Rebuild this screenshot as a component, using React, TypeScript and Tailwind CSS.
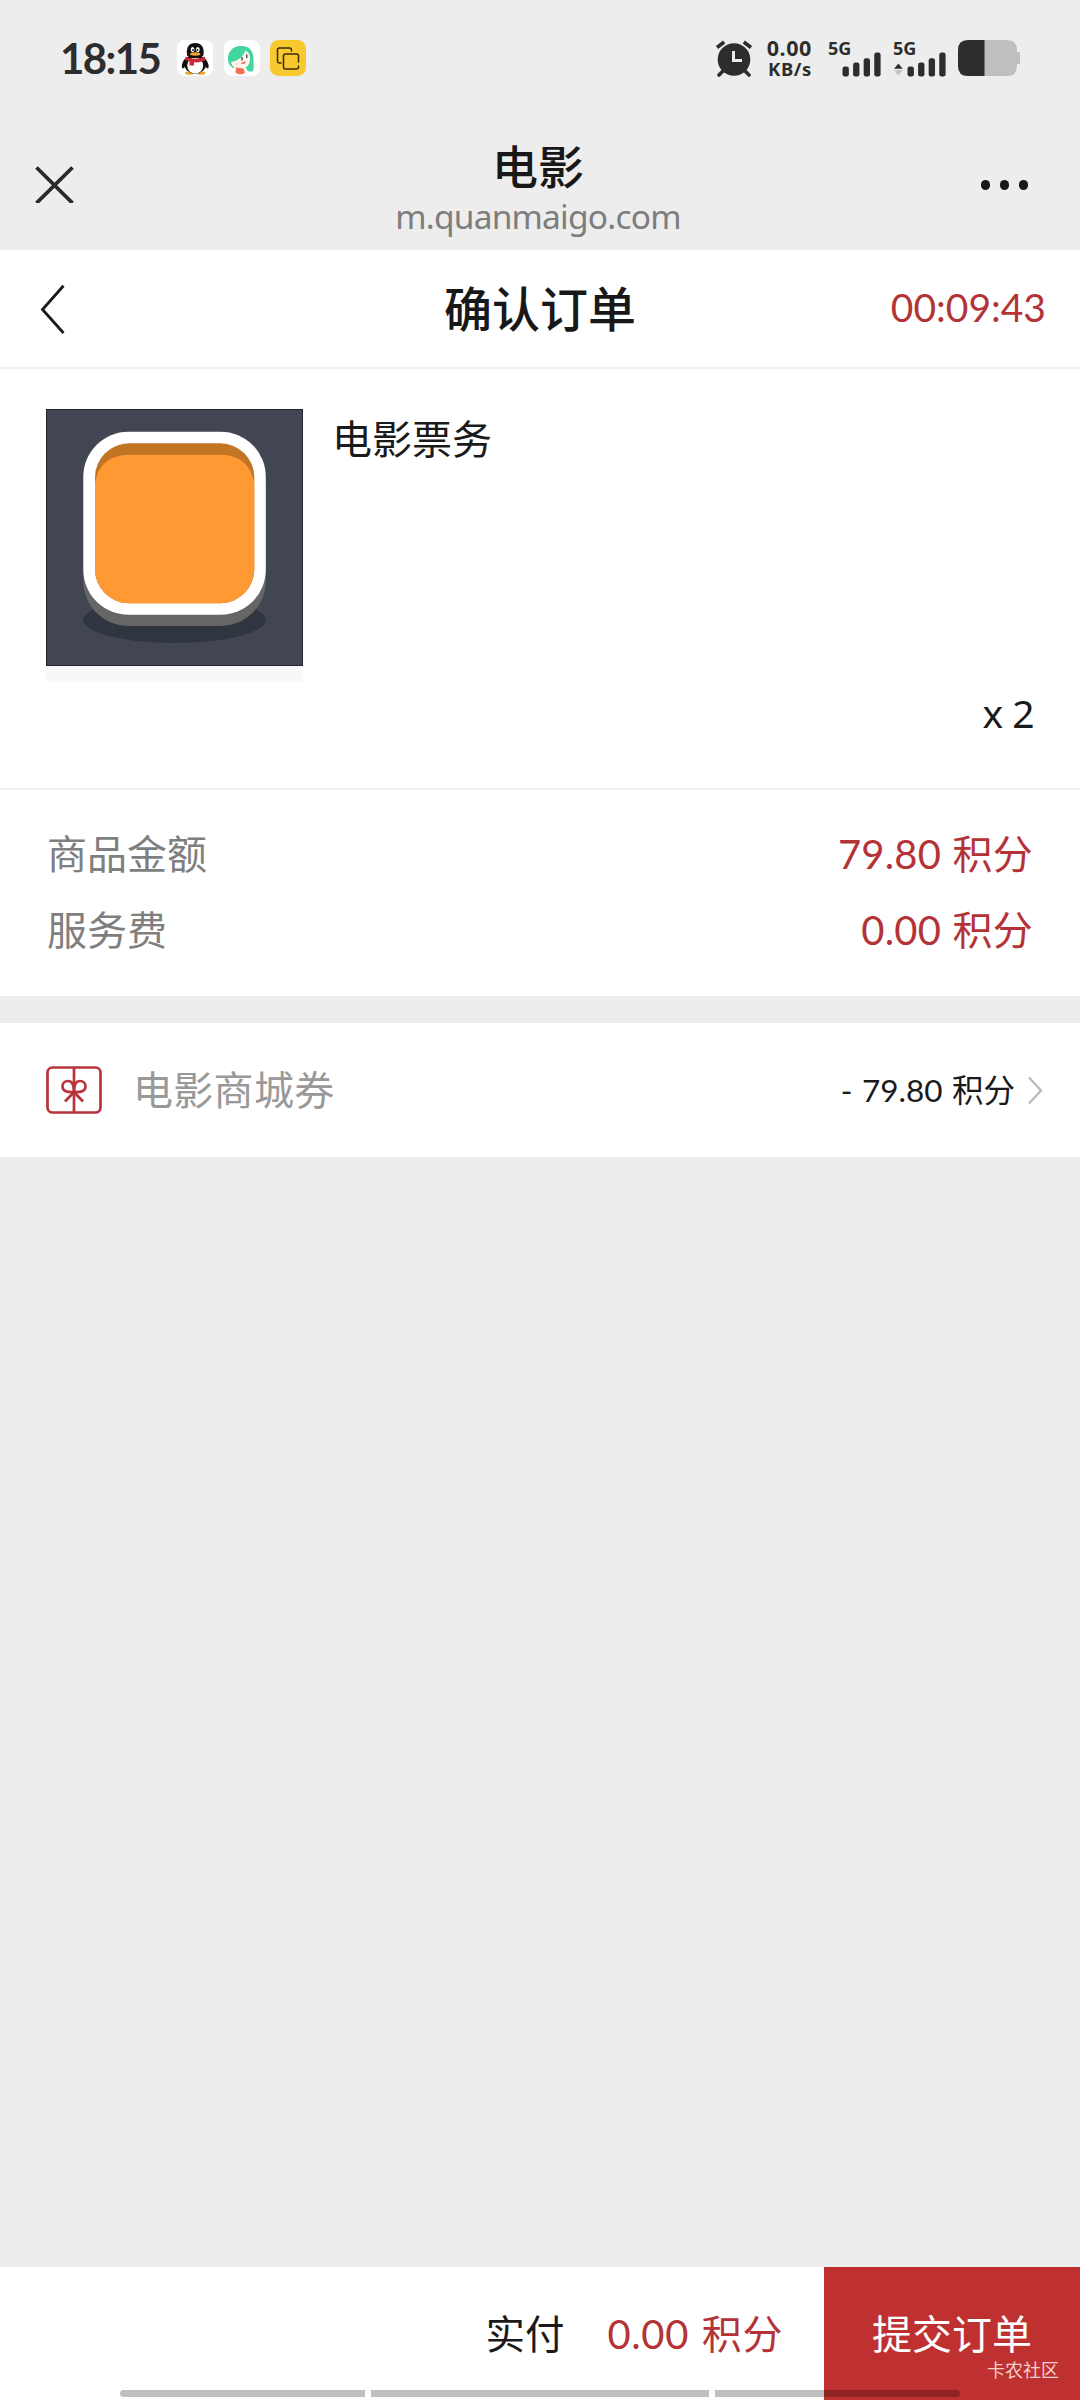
import React from "react";

const CJK = "font-['Noto_Sans_CJK_SC',sans-serif]";
const NUM = "font-['Lato','Noto_Sans_CJK_SC',sans-serif]";

function PenguinIcon() {
  return (
    <svg className="h-9 w-9" viewBox="0 0 36 36">
      <rect width="36" height="36" rx="8" fill="#fff" />
      <ellipse cx="12.5" cy="33" rx="4.5" ry="1.8" fill="#e9a52c" />
      <ellipse cx="24" cy="33" rx="4.5" ry="1.8" fill="#e9a52c" />
      <path d="M8.5 18C5 22 4 27 5.6 28.4C7 29 8 26 9 25ZM27.5 18C31.5 22 32.5 27 31 28.4C29.6 29 28.5 26 27.5 25Z" fill="#111" />
      <ellipse cx="18.2" cy="24" rx="11" ry="9.7" fill="#111" />
      <ellipse cx="18.2" cy="25.5" rx="8" ry="8" fill="#fff" />
      <path d="M10 15C9 7 12 3 18.2 3S27.5 7 26.5 15C25 19 11 19 10 15Z" fill="#111" />
      <ellipse cx="15.6" cy="9.6" rx="1.9" ry="2.6" fill="#fff" />
      <ellipse cx="20.8" cy="9.6" rx="1.9" ry="2.6" fill="#fff" />
      <circle cx="16" cy="10" r="0.9" fill="#111" />
      <circle cx="20.4" cy="10" r="0.9" fill="#111" />
      <ellipse cx="18.2" cy="14" rx="5.2" ry="1.7" fill="#f2a33a" />
      <path d="M8.5 16.5C14 19.5 22 19.5 27.8 16.5L28.5 20C24 22.5 20 22.6 17 22.3V25.5H12.5V21.5L8 19.8Z" fill="#c9283a" />
    </svg>
  );
}

function AvatarIcon() {
  return (
    <svg className="h-9 w-9" viewBox="0 0 36 36">
      <rect width="36" height="36" rx="8" fill="#fff" />
      <path d="M5.5 25C1.500 16 6 6 17 6C25 5.5 29.5 11 29.5 19C29.5 25 30.500 29 28.500 31.500C25 32 23 31 22 28L9 28Z" fill="#41d6a0" />
      <path d="M7 22C14 21.500 19.500 16 21.500 10.500C25 12.500 26.500 15.5 26 19.500C25.500 25.500 22 29 16.500 29C11.500 29 8 27 7 22Z" fill="#fff3ee" />
      <path d="M12 27.500L19.500 28.500L21 33C17 35 14 34.5 11.5 32.5Z" fill="#f26d52" />
      <path d="M18 17.5V20M22.8 15V17.5" stroke="#4a3a3a" strokeWidth="1.3" strokeLinecap="round" />
      <path d="M17.500 22.800C19 23.800 20.7 23 21.200 21.8" stroke="#d2483e" strokeWidth="1.2" fill="none" />
      <circle cx="12.5" cy="24" r="1.4" fill="#ffd9ce" />
    </svg>
  );
}

function CopyAppIcon() {
  return (
    <svg className="h-9 w-9" viewBox="0 0 36 36" fill="none" stroke="#3b2a10" strokeWidth="1.5" strokeLinecap="round">
      <rect width="36" height="36" rx="8.5" fill="#f7c92f" stroke="none" />
      <path d="M11 23H9.5Q7.5 23 7.5 21V10Q7.5 8 9.5 8H19.5Q21.5 8 21.5 10V11" />
      <path d="M28.5 22V16Q28.5 14 26.5 14H15.5Q13.5 14 13.5 16V27Q13.5 29 15.5 29H26.5Q28.5 29 28.5 27V26" />
    </svg>
  );
}

function AlarmIcon() {
  return (
    <svg className="h-[37px] w-[38px]" viewBox="0 0 38 37" fill="none">
      <path d="M8 31L4 35M30 31L34 35" stroke="#2d2d2d" strokeWidth="3.6" strokeLinecap="round" />
      <circle cx="19" cy="19.5" r="16.3" fill="#2d2d2d" />
      <path d="M2 7.5L9.2 2M36 7.5L28.8 2" stroke="#2d2d2d" strokeWidth="3.6" />
      <path d="M18.5 11V20.5H27" stroke="#ececec" strokeWidth="3" />
    </svg>
  );
}

function SignalBars({ data }: { data?: boolean }) {
  return (
    <svg className="h-[26px] w-[55px]" viewBox="0 0 55 26" fill="#2d2d2d">
      {data && <path d="M0 17.5L4.5 12L9 17.5Z" />}
      {data && <path d="M0 19L4.5 24.5L9 19Z" fill="#c2c2c2" />}
      <rect x="14" y="15" width="6.6" height="10.5" rx="2.4" />
      <rect x="25" y="11" width="6.6" height="14.5" rx="2.4" />
      <rect x="36" y="6.5" width="6.6" height="19" rx="2.4" />
      <rect x="47" y="0.5" width="6.6" height="25" rx="2.4" />
    </svg>
  );
}

function Signal({ data }: { data?: boolean }) {
  return (
    <div className="flex h-[37px] w-[65px] flex-col justify-between">
      <span className="h-[12px] font-['Noto_Sans'] text-[18px] leading-[17px] font-bold">5G</span>
      <SignalBars data={data} />
    </div>
  );
}

function Battery() {
  return (
    <svg className="h-9 w-[63px]" viewBox="0 0 63 36">
      <path d="M26 0H49Q59 0 59 10V12H62V24H59V26Q59 36 49 36H26Z" fill="#bfbfbf" />
      <path d="M26.5 0H10Q0 0 0 10V26Q0 36 10 36H26.5Z" fill="#2d2d2d" />
    </svg>
  );
}

function StatusBar() {
  return (
    <div className="flex h-[116px] items-center pr-[59px] pl-[60px] text-[#2d2d2d]">
      <span className="w-[117px] pb-px font-['Lato'] text-[42px] leading-[42px] font-bold tracking-[-1.6px] whitespace-nowrap">18:15</span>
      <div className="flex gap-[10.5px]">
        <PenguinIcon />
        <AvatarIcon />
        <CopyAppIcon />
      </div>
      <div className="ml-auto flex items-center">
        <AlarmIcon />
        <div className="mr-[16px] ml-[13px] flex w-[46px] flex-col items-end pb-px font-['Noto_Sans'] font-bold">
          <span className="text-[21.5px] leading-[21px] tracking-[0.6px]">0.00</span>
          <span className="text-[18.5px] leading-[21px] tracking-[0.6px]">KB/s</span>
        </div>
        <Signal />
        <Signal data />
        <Battery />
      </div>
    </div>
  );
}

function BrowserBar() {
  return (
    <div className="grid h-[134px] grid-cols-[1fr_auto_1fr] items-center pr-[52px] pl-[35px]">
      <svg className="h-10 w-10" viewBox="0 0 40 40" stroke="#2a2a2a" strokeWidth="3.8">
        <path d="M1.5 4.5L37.5 40M37.5 4.5L1.5 40" />
      </svg>
      <div className="flex flex-col items-center pt-[12px] pr-[7px] pl-[20px]">
        <span className={`${CJK} text-[46px] leading-[53px] font-medium text-[#181818]`}>电影</span>
        <span className="font-['Noto_Sans'] text-[33.5px] leading-[50px] tracking-[-0.8px] text-[#7d7d7d]">m.quanmaigo.com</span>
      </div>
      <div className="flex justify-end gap-[9.5px] pt-[4px]">
        <i className="h-[9.5px] w-[9.5px] rounded-full bg-[#181818]" />
        <i className="h-[9.5px] w-[9.5px] rounded-full bg-[#181818]" />
        <i className="h-[9.5px] w-[9.5px] rounded-full bg-[#181818]" />
      </div>
    </div>
  );
}

function PageHeader() {
  return (
    <div className="grid h-[119px] grid-cols-3 items-center border-b-2 border-[#f0f0f0] bg-white">
      <svg className="ml-10 h-[50px] w-[26px]" viewBox="0 0 26 50" fill="none" stroke="#1a1a1a" strokeWidth="2.8">
        <path d="M23.5 1.8L2.5 25.500L23.5 49" />
      </svg>
      <h1 className={`${CJK} pb-[6px] text-center text-[48px] leading-[60px] font-medium text-[#181818]`}>确认订单</h1>
      <span className="pr-[34px] pb-[3px] text-right font-['Lato'] text-[39px] leading-[60px] text-[#b43336]">00:09:43</span>
    </div>
  );
}

function ProductThumb() {
  return (
    <div className="h-[273px] w-[257px] bg-[#f8f8f8]">
      <svg className="h-[257px] w-[257px]" viewBox="0 0 257 257">
        <rect width="257" height="257" fill="#20242f" />
        <rect x="1" y="1" width="255" height="255" fill="#414652" />
        <ellipse cx="128.5" cy="211" rx="91.3" ry="23" fill="#2f3640" />
        <rect x="37.3" y="34" width="182.5" height="183" rx="45" fill="#666" />
        <rect x="37.3" y="22.7" width="182.5" height="183" rx="45" fill="#fff" />
        <rect x="49" y="34.3" width="159.3" height="160" rx="34" fill="#c37526" />
        <path d="M49 74Q54 46 83 45.7H174.3Q203 46 208.3 74V160.3A34 34 0 0 1 174.3 194.3H83A34 34 0 0 1 49 160.3Z" fill="#ff9933" />
      </svg>
    </div>
  );
}

function Product() {
  return (
    <div className="flex h-[421px] border-b-2 border-[#f0f0f0] bg-white pt-10 pr-[46px] pl-[46px]">
      <ProductThumb />
      <span className={`${CJK} -mt-[2px] ml-[29px] text-[40px] leading-[60px] text-[#1a1a1a]`}>电影票务</span>
      <span className="mb-[45px] ml-auto self-end font-['Noto_Sans'] text-[39px] leading-[60px] tracking-[-0.5px] text-[#1a1a1a]">x 2</span>
    </div>
  );
}

function AmountRow({ label, value }: { label: string; value: string }) {
  return (
    <div className="flex h-[76px] items-center justify-between">
      <span className={`${CJK} pb-[4px] text-[40px] leading-[60px] text-[#7f7f7f]`}>{label}</span>
      <span className={`${NUM} text-[40px] leading-[60px] tracking-[0.2px] [word-spacing:1px] text-[#b43336]`}>{value}</span>
    </div>
  );
}

function GiftIcon() {
  return (
    <svg className="-mt-px h-[48px] w-[56px]" viewBox="0 0 56 48" fill="none" stroke="#b8343a" strokeWidth="2.7">
      <rect x="1.5" y="1.5" width="53" height="45" rx="5" />
      <path d="M28 1.5V46.5" />
      <path d="M28 26C28 17 25 15 22 15C18.5 15 16.5 17.5 16.5 20.5C16.5 24.5 20 26.5 28 26C36 26.5 39.5 24.5 39.5 20.5C39.5 17.5 37.5 15 34 15C31 15 28 17 28 26" />
      <path d="M28 26L19 35.5M28 26L37 35.5" />
    </svg>
  );
}

function Coupon() {
  return (
    <div className="flex h-[134px] items-center bg-white pr-[37px] pl-[46px]">
      <GiftIcon />
      <span className={`${CJK} ml-[31px] pb-[4px] text-[40px] leading-[60px] tracking-[0.3px] text-[#999]`}>电影商城券</span>
      <span className={`${NUM} mr-[13px] ml-auto text-[31.5px] leading-[48px] [word-spacing:1.5px] text-[#1a1a1a]`}>- 79.80 积分</span>
      <svg className="h-7 w-[15px]" viewBox="0 0 15 28" fill="none" stroke="#bbb" strokeWidth="2.4">
        <path d="M1 1.5L13 14.5L1 27.5" />
      </svg>
    </div>
  );
}

function CheckoutBar() {
  return (
    <div className="relative flex h-[133px] bg-white">
      <div className="flex flex-1 items-center justify-end pr-[41px]">
        <span className={`${CJK} mr-[43px] pb-[4px] text-[39.5px] leading-[60px] text-[#1a1a1a]`}>实付</span>
        <span className={`${NUM} text-[40px] leading-[60px] tracking-[0.6px] [word-spacing:2px] text-[#b43336]`}>0.00 积分</span>
      </div>
      <button className={`${CJK} w-[256px] bg-[#bf3131] pb-[4px] text-[40px] leading-[44px] text-white`}>提交订单</button>
      <span className={`${CJK} absolute right-[21px] bottom-[21px] text-[18px] leading-[20px] text-[#f3cfcf]`}>卡农社区</span>
      <div className="absolute bottom-[3px] left-[120px] flex h-[7px] gap-[6px]">
        <i className="w-[245px] rounded-l-full bg-black/25" />
        <i className="w-[338px] bg-black/25" />
        <i className="w-[245px] rounded-r-full bg-black/25" />
      </div>
    </div>
  );
}

export default function App() {
  return (
    <div className="flex h-[2400px] w-[1080px] flex-col overflow-hidden bg-[#ededed]">
      <StatusBar />
      <BrowserBar />
      <PageHeader />
      <Product />
      <div className="h-[206px] bg-white pt-[26px] pr-[47px] pl-[47px]">
        <AmountRow label="商品金额" value="79.80 积分" />
        <AmountRow label="服务费" value="0.00 积分" />
      </div>
      <div className="h-[27px]" />
      <Coupon />
      <div className="flex-1" />
      <CheckoutBar />
    </div>
  );
}
